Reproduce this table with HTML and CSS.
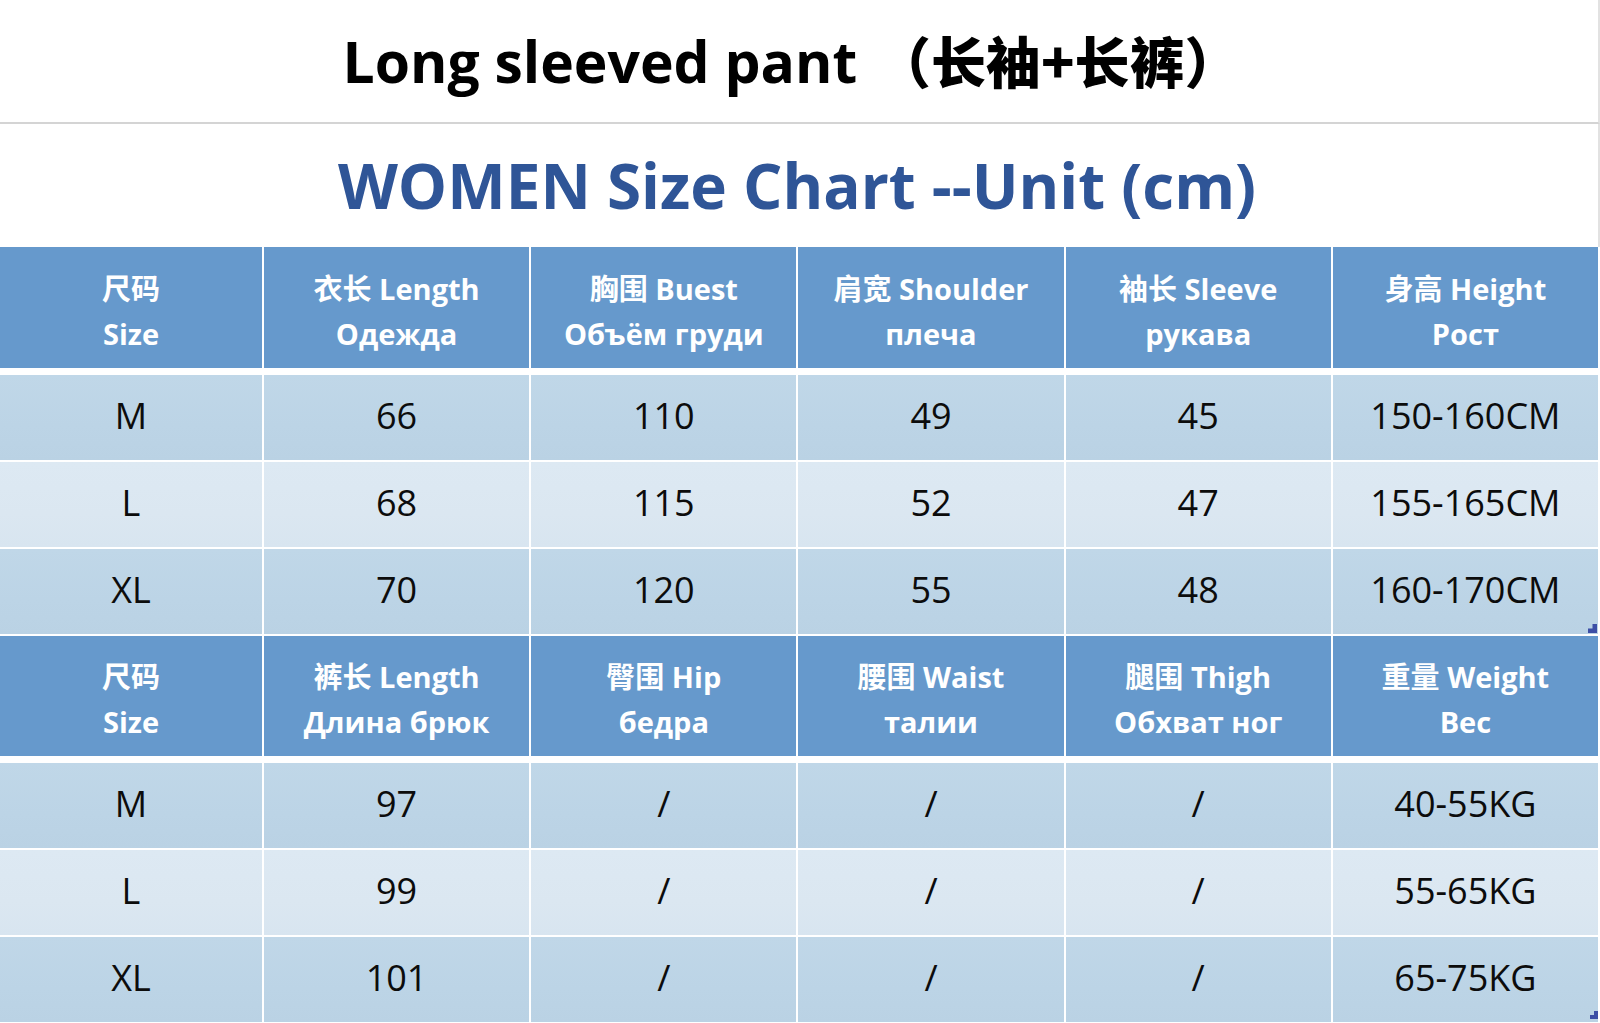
FILE: index.html
```html
<!DOCTYPE html>
<html lang="en">
<head>
<meta charset="utf-8">
<title>WOMEN Size Chart</title>
<link rel="stylesheet" href="styles.css">
</head>
<body>
<div class="page">
  <div class="title-block"><h1 class="title">Long sleeved pant <span class="cjk">（长袖+长裤）</span></h1></div>
  <div class="sub-block"><h2 class="subtitle">WOMEN Size Chart --Unit (cm)</h2></div>
  <div class="chart">
    <div class="row head">
      <div class="cell"><span>尺码</span><span>Size</span></div>
      <div class="cell"><span>衣长 Length</span><span>Одежда</span></div>
      <div class="cell"><span>胸围 Buest</span><span>Объём груди</span></div>
      <div class="cell"><span>肩宽 Shoulder</span><span>плеча</span></div>
      <div class="cell"><span>袖长 Sleeve</span><span>рукава</span></div>
      <div class="cell"><span>身高 Height</span><span>Рост</span></div>
    </div>
    <div class="row data dark">
      <div class="cell">M</div><div class="cell">66</div><div class="cell">110</div><div class="cell">49</div><div class="cell">45</div><div class="cell">150-160CM</div>
    </div>
    <div class="row data light">
      <div class="cell">L</div><div class="cell">68</div><div class="cell">115</div><div class="cell">52</div><div class="cell">47</div><div class="cell">155-165CM</div>
    </div>
    <div class="row data dark">
      <div class="cell">XL</div><div class="cell">70</div><div class="cell">120</div><div class="cell">55</div><div class="cell">48</div><div class="cell">160-170CM<i class="mark"></i></div>
    </div>
    <div class="row head">
      <div class="cell"><span>尺码</span><span>Size</span></div>
      <div class="cell"><span>裤长 Length</span><span>Длина брюк</span></div>
      <div class="cell"><span>臀围 Hip</span><span>бедра</span></div>
      <div class="cell"><span>腰围 Waist</span><span>талии</span></div>
      <div class="cell"><span>腿围 Thigh</span><span>Обхват ног</span></div>
      <div class="cell"><span>重量 Weight</span><span>Вес</span></div>
    </div>
    <div class="row data dark">
      <div class="cell">M</div><div class="cell">97</div><div class="cell">/</div><div class="cell">/</div><div class="cell">/</div><div class="cell">40-55KG</div>
    </div>
    <div class="row data light">
      <div class="cell">L</div><div class="cell">99</div><div class="cell">/</div><div class="cell">/</div><div class="cell">/</div><div class="cell">55-65KG</div>
    </div>
    <div class="row data dark">
      <div class="cell">XL</div><div class="cell">101</div><div class="cell">/</div><div class="cell">/</div><div class="cell">/</div><div class="cell">65-75KG<i class="mark mark-bottom"></i></div>
    </div>
  </div>
</div>
</body>
</html>
```

FILE: styles.css
```css
* { box-sizing: border-box; }
html, body {
  margin: 0;
  padding: 0;
  background: #ffffff;
}
body {
  font-family: "Open Sans", "Noto Sans CJK SC", sans-serif;
  width: 1600px;
  height: 1023px;
  overflow: hidden;
}
.page {
  width: 1600px;
  display: flex;
  flex-direction: column;
}
.title-block {
  width: 1600px;
  height: 124px;
  display: flex;
  align-items: center;
  justify-content: center;
  border-right: 2px solid #e2e2e2;
  border-bottom: 2px solid #d4d4d4;
}
.title {
  margin: 0;
  font-size: 57px;
  font-weight: 700;
  color: #000;
  line-height: 1;
  transform: translateX(-8px);
}
.title .cjk {
  font-family: "Noto Sans CJK SC", sans-serif;
  font-weight: 900;
  font-size: 55px;
  margin-left: 4px;
}
.sub-block {
  height: 123px;
  width: 1600px;
  display: flex;
  align-items: center;
  justify-content: center;
  border-right: 2px solid #e2e2e2;
}
.subtitle {
  margin: 0;
  font-size: 62px;
  font-weight: 700;
  color: #2f5597;
  line-height: 1;
  transform: translate(-2px, -1px);
}
.chart {
  width: 1598px;
  display: flex;
  flex-direction: column;
  gap: 2px;
}
.row {
  display: grid;
  grid-template-columns: 262px repeat(5, 1fr);
  column-gap: 2px;
}
.head {
  height: 121px;
}
.head + .row {
  margin-top: 5px;
}
.row.head:nth-child(5) {
  height: 120px;
}
.data {
  height: 85px;
}
.cell {
  position: relative;
  display: flex;
  flex-direction: column;
  align-items: center;
  justify-content: center;
  text-align: center;
}
.head .cell {
  background: #6699cc;
  color: #ffffff;
  font-weight: 700;
  font-size: 29px;
  line-height: 45px;
  padding-top: 6px;
}
.data .cell {
  font-size: 36px;
  color: #0c0c0c;
  font-weight: 400;
  padding-bottom: 4px;
}
.dark .cell {
  background: linear-gradient(180deg, #c0d7e8 0%, #bcd4e6 60%, #bad2e4 100%);
}
.light .cell {
  background: linear-gradient(180deg, #dde9f3 0%, #dbe7f1 60%, #d8e5f0 100%);
}
.mark {
  position: absolute;
  right: 1px;
  bottom: 1px;
  width: 9px;
  height: 9px;
  background: #3d4fa6;
  clip-path: polygon(50% 0, 100% 0, 100% 100%, 0 100%, 0 50%, 50% 50%);
}
.mark-bottom {
  bottom: 3px;
  right: 0;
  width: 8px;
  height: 8px;
}
```
